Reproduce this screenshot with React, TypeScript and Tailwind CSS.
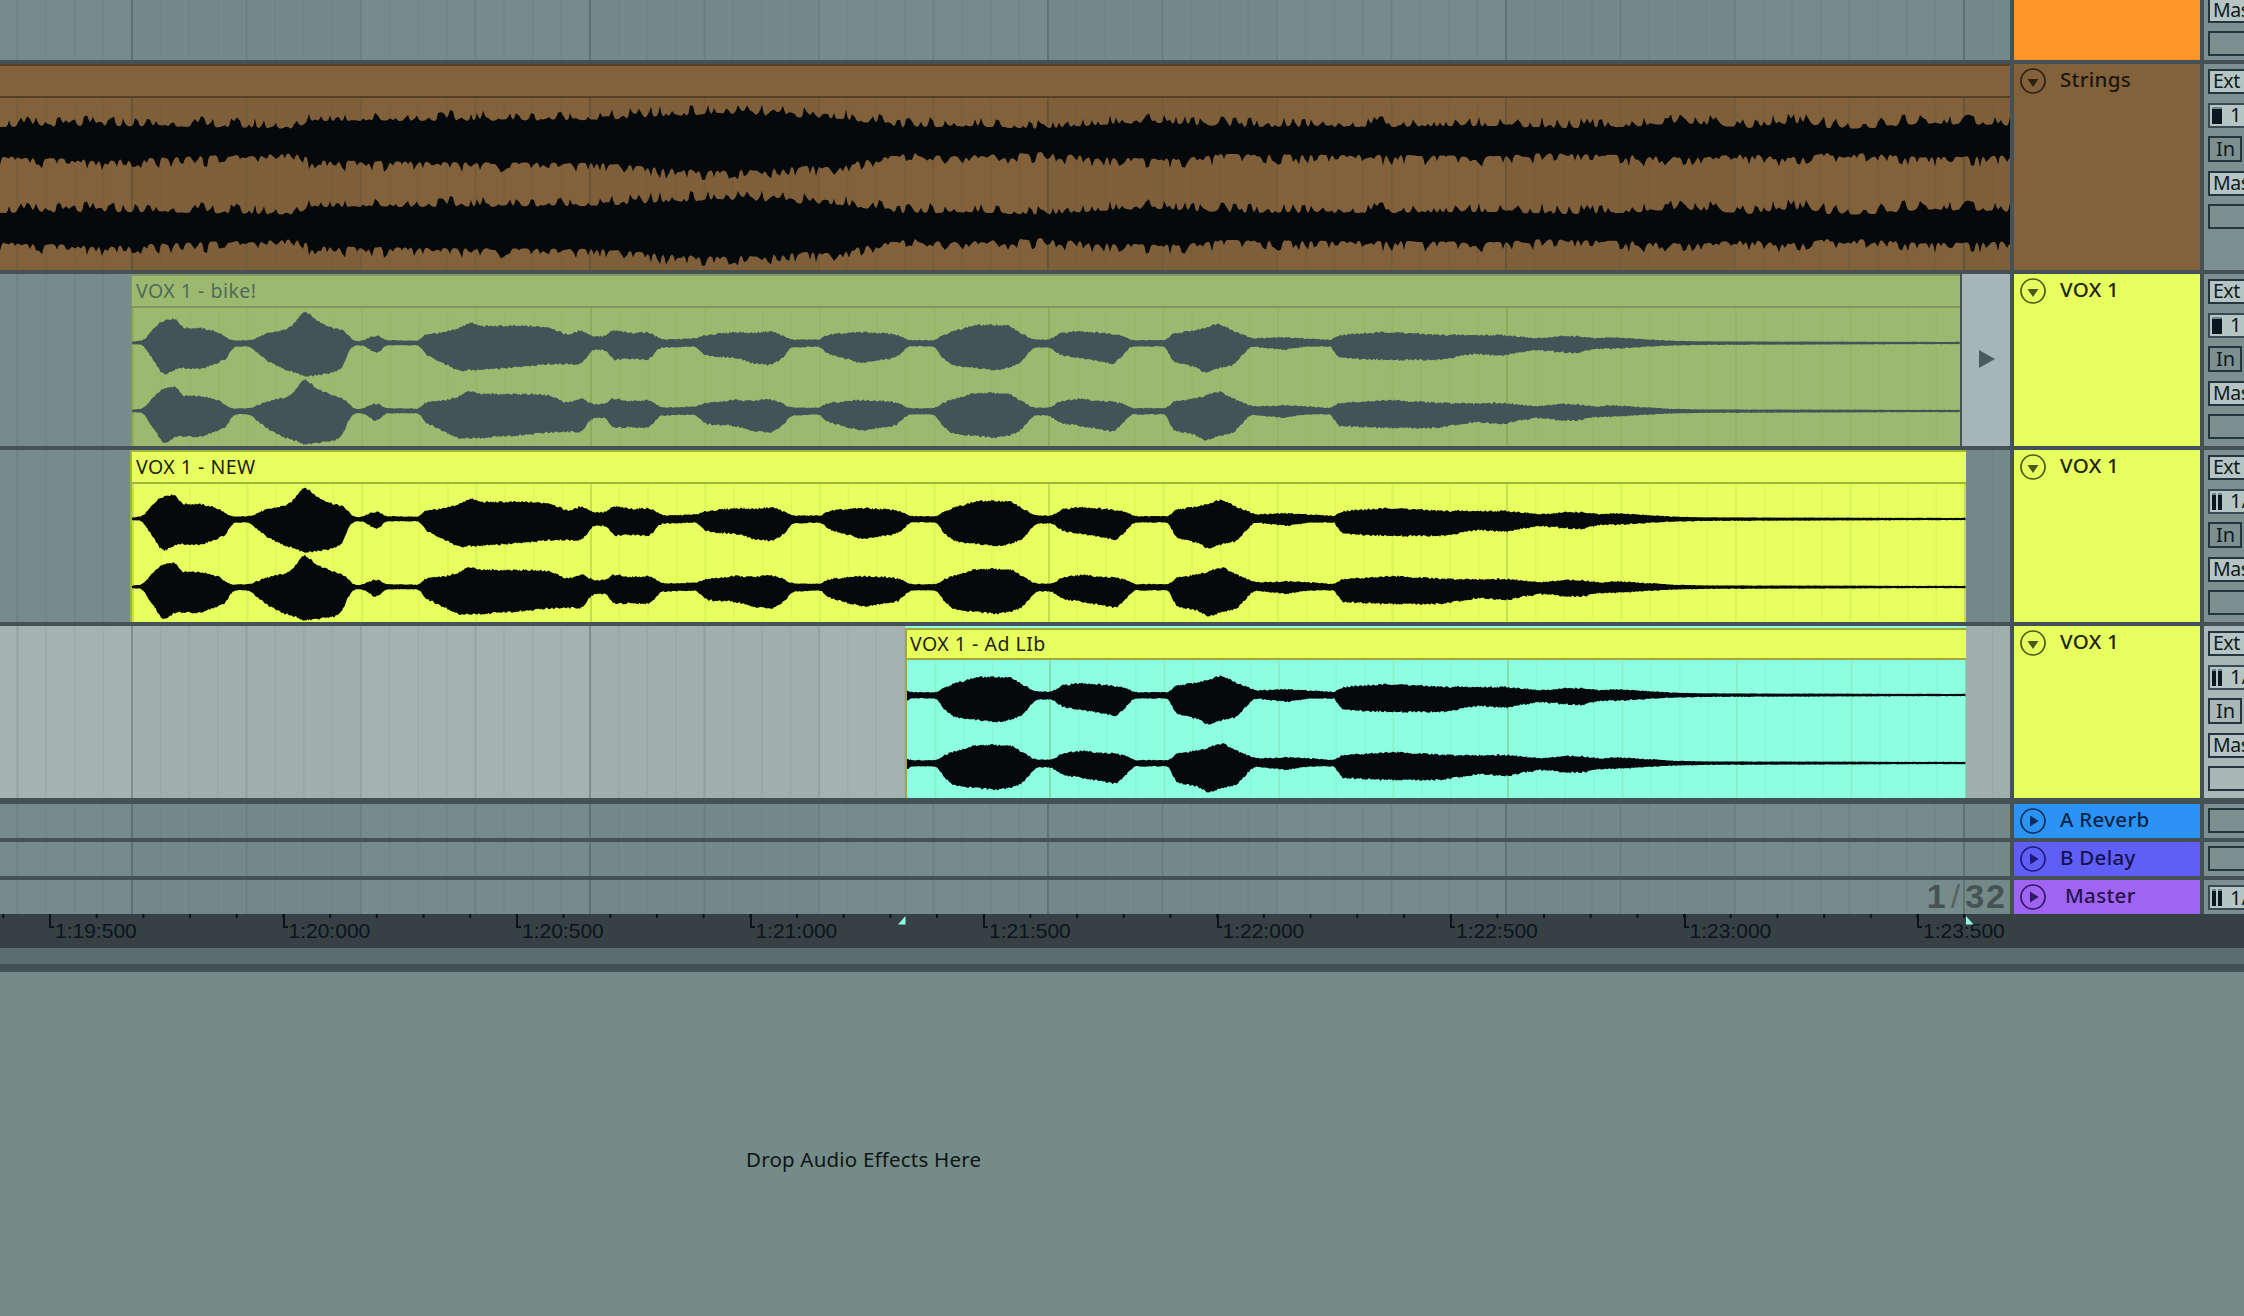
type Env = [number, number, number][];

// envelope of the vocal take: [x, up, down] in page pixels
const VOX_ENV: Env = [
  [131, 1, 1], [143, 2.5, 1.5], [147, 6, 9], [153, 14, 16], [157, 18, 24], [163, 22, 32], [177, 24, 24], [180, 14, 24], [200, 14, 25],
  [217, 10, 19], [227, 4, 14], [232, 2, 3], [250, 2.5, 3], [267, 8.5, 17], [283, 12, 25], [290, 14, 27], [298, 24, 30], [303, 32, 32],
  [308, 29, 32], [317, 21, 31], [333, 14, 29], [343, 12, 24], [347, 8, 10], [353, 2, 2], [362, 1.5, 2], [367, 4, 4], [377, 7, 10],
  [385, 2.5, 2], [420, 2, 2], [425, 8, 10], [443, 9, 19], [460, 14, 27], [470, 20, 26], [480, 16, 26], [523, 16, 23], [550, 15, 20],
  [563, 9, 20], [568, 7, 20], [583, 12, 20], [592, 6, 6], [607, 6, 6], [613, 12, 16], [630, 9, 15], [650, 10, 16], [660, 4, 4],
  [667, 3, 4], [697, 4, 3], [707, 7, 12], [737, 10, 14], [753, 9, 19], [773, 11, 21], [785, 6, 13], [792, 3, 4], [823, 3, 3],
  [827, 7, 9], [863, 10, 19], [897, 8, 14], [910, 2.5, 3], [938, 2.5, 3], [942, 6, 11], [953, 10, 21], [977, 17, 24], [1000, 17, 26],
  [1013, 16, 23], [1023, 9, 19], [1035, 3, 4], [1053, 3, 4], [1063, 9, 11], [1083, 11, 14], [1117, 8, 20], [1128, 6, 9], [1133, 2.5, 3],
  [1170, 2.5, 3], [1175, 8, 18], [1200, 12, 23], [1207, 14, 29], [1222, 19, 24], [1237, 11, 21], [1250, 6, 6], [1255, 4, 3], [1287, 5, 6],
  [1310, 4, 3], [1337, 2.5, 3], [1340, 7, 14], [1393, 10, 16], [1443, 7, 16], [1477, 7, 10], [1507, 7, 12], [1520, 6, 9], [1540, 4, 6],
  [1567, 6, 8], [1580, 6, 9], [1600, 4, 5], [1617, 5, 5], [1637, 4, 4], [1673, 2, 2.3], [1707, 1.4, 1.6], [1800, 1.2, 1.4], [1917, 1, 1], [1966, 1, 1],
];

const STRINGS_ENV: Env = [
  [0, 14, 15], [100, 15, 19], [200, 14, 15], [300, 12, 12], [312, 20, 19], [440, 20, 21], [610, 21, 22], [650, 24, 26], [700, 26, 29],
  [730, 27, 29], [790, 24, 26], [840, 22, 23], [915, 12, 11], [950, 15, 15], [1040, 12, 11], [1100, 16, 15], [1160, 18, 18], [1220, 14, 13],
  [1400, 14, 14], [1500, 15, 15], [1540, 13, 12], [1600, 13, 13], [1690, 17, 16], [1750, 13, 13], [1780, 17, 16], [1810, 17, 15], [1830, 12, 11],
  [1880, 13, 13], [1920, 17, 16], [1990, 16, 15], [2010, 15, 14],
];

function lookup(env: Env, x: number): [number, number] {
  for (let i = 1; i < env.length; i++) {
    if (x <= env[i][0]) {
      const [x0, u0, d0] = env[i - 1];
      const [x1, u1, d1] = env[i];
      const t = (x - x0) / (x1 - x0);
      return [u0 + (u1 - u0) * t, d0 + (d1 - d0) * t];
    }
  }
  const last = env[env.length - 1];
  return [last[1], last[2]];
}

function smooth(env: Env, x: number): [number, number] {
  let up = 0;
  let down = 0;
  for (let k = -2; k <= 2; k++) {
    const [u, d] = lookup(env, x + k * 1.6);
    up += u;
    down += d;
  }
  return [up / 5, down / 5];
}

function noise(i: number, seed: number) {
  const v = Math.sin(i * 12.9898 + seed * 78.233) * 43758.5453;
  return v - Math.floor(v);
}

function voxPath(from: number, to: number, origin: number, centre: number, seed: number) {
  const top: string[] = [];
  const bottom: string[] = [];
  const step = 1.2;
  let n = Math.round(from / step);
  for (let x = from; x <= to; x += step, n++) {
    const [up, down] = smooth(VOX_ENV, x);
    const a = noise(n, seed) * 2 * Math.min(1, up / 7);
    const b = noise(n + 500, seed) * 2 * Math.min(1, down / 7);
    top.push(`${(x - origin).toFixed(1)} ${(centre - up - a).toFixed(1)}`);
    bottom.push(`${(x - origin).toFixed(1)} ${(centre + down + b).toFixed(1)}`);
  }
  return `M${top.join('L')}L${bottom.reverse().join('L')}Z`;
}

// strings are dense: spiky peaks sitting on a fat body
function spikes(n: number, seed: number) {
  const k = Math.floor(n / 2);
  const t = (n % 2) / 2;
  const v = noise(k, seed) * (1 - t) + noise(k + 1, seed) * t;
  return Math.pow(v, 2.4) * 11;
}

function stringsPath(centre: number) {
  const top: string[] = [];
  const bottom: string[] = [];
  let n = 0;
  for (let x = 0; x <= 2010; x += 1.5, n++) {
    const [up, down] = lookup(STRINGS_ENV, x);
    top.push(`${x.toFixed(1)} ${(centre - up - spikes(n, 5)).toFixed(1)}`);
    bottom.push(`${x.toFixed(1)} ${(centre + down + spikes(n, 9)).toFixed(1)}`);
  }
  return `M${top.join('L')}L${bottom.reverse().join('L')}Z`;
}

function VoxWave({ from, color }: { from: number; color: string }) {
  const end = 1966;
  return (
    <svg className="block h-[138px] w-full" viewBox={`0 0 ${end - from} 138`} preserveAspectRatio="none">
      <path d={voxPath(from, end, from, 35, 1)} fill={color} />
      <path d={voxPath(from, end, from, 103, 2)} fill={color} />
    </svg>
  );
}

function StringsWave() {
  return (
    <svg className="block h-[172px] w-full" viewBox="0 0 2010 172" preserveAspectRatio="none">
      <path d={stringsPath(43)} fill="#05090c" />
      <path d={stringsPath(129)} fill="#05090c" />
    </svg>
  );
}

const gridLines =
  'bg-[linear-gradient(90deg,rgba(40,60,50,0.18)_2px,transparent_2px),linear-gradient(90deg,rgba(40,60,50,0.07)_2px,transparent_2px),linear-gradient(90deg,rgba(40,60,50,0.06)_2px,transparent_2px),linear-gradient(90deg,rgba(0,10,10,0.025)_50%,transparent_50%)] [background-size:458px_100%,114.5px_100%,28.625px_100%,458px_100%]';
const clipLines =
  'bg-[linear-gradient(90deg,rgba(90,130,30,0.16)_2px,transparent_2px),linear-gradient(90deg,rgba(90,130,30,0.05)_2px,transparent_2px),linear-gradient(90deg,rgba(90,130,30,0.06)_2px,transparent_2px)] [background-size:458px_100%,114.5px_100%,28.625px_100%]';
const gridFromPage = '[background-position:131px_0,16.5px_0,16.5px_0,131px_0]';
const gridFromClip = '[background-position:0_0,0_0,0_0]';
const gridFromAdLib = '[background-position:142px_0,27.5px_0,27.5px_0]';

const sans = "font-['Noto_Sans','Open_Sans',sans-serif]";

function TrackIcon({ open, color }: { open?: boolean; color: string }) {
  return (
    <svg width="26" height="26" viewBox="-13 -13 26 26" className="shrink-0">
      <circle r="12" fill="none" stroke={color} strokeWidth="1.7" />
      {open ? <path d="M-5.5 -2H5.5L0 6Z" fill={color} /> : <path d="M-3 -5.5V5.5L5.7 0Z" fill={color} />}
    </svg>
  );
}

function TrackTitle({
  name,
  bg,
  text,
  icon,
  open,
  nameOffset = 'ml-[14px]',
}: {
  name: string;
  bg: string;
  text: string;
  icon: string;
  open?: boolean;
  nameOffset?: string;
}) {
  return (
    <div className={`flex w-[186px] shrink-0 items-start pl-[6px] pt-[4px] ${bg}`}>
      <TrackIcon open={open} color={icon} />
      <span className={`${nameOffset} -mt-[2px] whitespace-pre text-[20.5px] font-medium leading-[26px] tracking-[0.3px] ${sans} ${text}`}>
        {name}
      </span>
    </div>
  );
}

function LightBox({ label }: { label: string }) {
  return (
    <div className={`h-[25px] w-[60px] shrink-0 overflow-hidden border-2 border-[#26343b] bg-[#b5c5c4] pl-[3px] text-[19.5px] leading-[20px] tracking-[-0.5px] text-[#0e1a20] ${sans}`}>
      {label}
    </div>
  );
}

function MonitorBox({ label, bars }: { label: string; bars: 1 | 2 }) {
  return (
    <div className={`flex h-[25px] w-[60px] shrink-0 items-center gap-[8px] overflow-hidden border-2 border-[#3a4a50] bg-[#b5c5c4] pl-[2px] text-[20px] leading-[20px] text-[#0e1a20] ${sans}`}>
      {bars === 1 ? (
        <span className="h-[17px] w-[10px] shrink-0 border-t-[2px] border-[#71858a] bg-[#0c1820]" />
      ) : (
        <span className="flex shrink-0 gap-[2px]">
          <span className="h-[17px] w-[4px] border-t-[2px] border-[#71858a] bg-[#0c1820]" />
          <span className="h-[17px] w-[4px] border-t-[2px] border-[#71858a] bg-[#0c1820]" />
        </span>
      )}
      <span>{label}</span>
    </div>
  );
}

function InBox() {
  return (
    <div className={`h-[26px] w-[34px] shrink-0 border-2 border-[#26343b] pl-[6px] text-[20px] leading-[21px] text-[#0e1a20] ${sans}`}>In</div>
  );
}

function EmptyBox() {
  return <div className="h-[25px] w-[60px] shrink-0 border-2 border-[#26343b]" />;
}

function RoutingPanel({ mono, light }: { mono: string; light?: boolean }) {
  return (
    <div className={`flex min-w-0 flex-1 flex-col gap-[8.5px] overflow-hidden pl-[4px] pt-[5px] ${light ? 'bg-[#a9b8b7]' : 'bg-[#7c918f]'}`}>
      <LightBox label="Ext" />
      <MonitorBox label={mono} bars={mono === '1' ? 1 : 2} />
      <InBox />
      <LightBox label="Mas" />
      <EmptyBox />
    </div>
  );
}

function ClipTitle({ label, bg, line, text }: { label: string; bg: string; line: string; text: string }) {
  return (
    <div className={`h-[34px] shrink-0 border-y-2 pl-[4px] text-[19.5px] leading-[30px] tracking-[0.5px] ${sans} ${bg} ${line} ${text}`}>{label}</div>
  );
}

const TICK_LABELS = ['1:19:500', '1:20:000', '1:20:500', '1:21:000', '1:21:500', '1:22:000', '1:22:500', '1:23:000', '1:23:500'];

function Ruler() {
  return (
    <div className="relative flex h-[34px] w-full shrink-0 bg-[#364143]">
      <div className="flex h-full w-[2010px] bg-[linear-gradient(90deg,#0c1418_2px,transparent_2px)] bg-repeat-x pl-[49px] [background-position:2.3px_0] [background-size:46.7px_4px]">
        {TICK_LABELS.map((t) => (
          <div key={t} className="relative w-[233.5px] shrink-0 pl-[6px] pt-[5px]">
            <span className="absolute left-0 top-0 h-[14px] w-[5px] border-b-2 border-l-2 border-[#0c1418]" />
            <span className="font-['Liberation_Sans',Arial,sans-serif] text-[21px] leading-[24px] text-[#0c1420]">{t}</span>
          </div>
        ))}
      </div>
      {/* loop brace markers */}
      <svg className="absolute left-[898px] top-[2px]" width="8" height="9" viewBox="0 0 8 9">
        <path d="M7.5 0V8.5H0Z" fill="#8fffe0" />
      </svg>
      <svg className="absolute left-[1966px] top-[2px]" width="8" height="9" viewBox="0 0 8 9">
        <path d="M0 0V8.5H7.5Z" fill="#8fffe0" />
      </svg>
    </div>
  );
}

export default function App() {
  return (
    <div className="flex h-[1316px] w-[2244px] flex-col overflow-hidden bg-[#748b87]">
      <div className="flex flex-col gap-[4px] bg-[#445256]">
        {/* group track */}
        <div className="flex h-[60px] gap-[4px]">
          <div className={`w-[2010px] shrink-0 bg-[#768c8b] ${gridLines} ${gridFromPage}`} />
          <div className="w-[186px] shrink-0 bg-[#ff9429]" />
          <div className="flex min-w-0 flex-1 flex-col justify-end gap-[8.5px] overflow-hidden bg-[#7c918f] pb-[4px] pl-[4px]">
            <LightBox label="Mas" />
            <EmptyBox />
          </div>
        </div>

        {/* Strings */}
        <div className="flex h-[206px] gap-[4px]">
          <div className="flex w-[2010px] shrink-0 flex-col overflow-hidden">
            <div className="h-[34px] shrink-0 border-y-2 border-[#574026] bg-[#82613b]" />
            <div className={`flex-1 bg-[#82613b] ${gridLines} ${gridFromPage}`}>
              <StringsWave />
            </div>
          </div>
          <TrackTitle name="Strings" bg="bg-[#82613b]" text="text-[#1a1610]" icon="#2b2216" open />
          <RoutingPanel mono="1" />
        </div>

        {/* VOX 1 - bike! */}
        <div className="flex h-[172px] gap-[4px]">
          <div className={`flex w-[2010px] shrink-0 bg-[#768c8b] ${gridLines} ${gridFromPage}`}>
            <div className="ml-[131px] flex w-[1829px] shrink-0 flex-col overflow-hidden border-l-[1px] border-[#7f9660] bg-[#9db96f]">
              <ClipTitle label="VOX 1 - bike!" bg="bg-[#9db96f]" line="border-[#7f9660]" text="text-[#4f6a5c]" />
              <div className={`h-[138px] shrink-0 ${clipLines} ${gridFromClip}`}>
                <VoxWave from={131} color="#445357" />
              </div>
            </div>
            <div className="flex flex-1 items-center justify-center border-l-2 border-[#445256] bg-[#a6b5b5]">
              <svg width="16" height="18" viewBox="0 0 16 18" className="ml-[1px] mt-[-2px]">
                <path d="M0 0L16 9L0 18Z" fill="#4a5b5e" />
              </svg>
            </div>
          </div>
          <TrackTitle name="VOX 1" bg="bg-[#e8ff60]" text="text-[#1c2608]" icon="#4a5a15" open />
          <RoutingPanel mono="1" />
        </div>

        {/* VOX 1 - NEW */}
        <div className="flex h-[172px] gap-[4px]">
          <div className={`flex w-[2010px] shrink-0 bg-[#768c8b] ${gridLines} ${gridFromPage}`}>
            <div className="ml-[130px] flex w-[1836px] shrink-0 flex-col overflow-hidden border-l-2 border-[#a0b53c] bg-[#e8ff60]">
              <ClipTitle label="VOX 1 - NEW" bg="bg-[#e8ff60]" line="border-[#a0b53c]" text="text-[#1a1f06]" />
              <div className={`h-[138px] shrink-0 ${clipLines} ${gridFromClip}`}>
                <VoxWave from={132} color="#05090c" />
              </div>
            </div>
          </div>
          <TrackTitle name="VOX 1" bg="bg-[#e8ff60]" text="text-[#1c2608]" icon="#4a5a15" open />
          <RoutingPanel mono="1/" />
        </div>

        {/* VOX 1 - Ad LIb */}
        <div className="flex h-[172px] gap-[4px]">
          <div className={`flex w-[2010px] shrink-0 bg-[#a4b3b1] ${gridLines} ${gridFromPage}`}>
            <div className="ml-[905px] flex w-[1061px] shrink-0 flex-col overflow-hidden">
              <div className="h-[2px] shrink-0 bg-[#8fffe0]" />
              <div className="flex flex-1 flex-col border-l-2 border-[#a0a83a] bg-[#8dffe0]">
                <div className={`h-[32px] shrink-0 border-y-2 border-[#a0a83a] bg-[#e8ff60] pl-[3px] text-[19.5px] leading-[28px] tracking-[0.5px] text-[#1f2410] ${sans}`}>
                  VOX 1 - Ad LIb
                </div>
                <div className={`h-[138px] shrink-0 ${clipLines} ${gridFromAdLib}`}>
                  <VoxWave from={907} color="#05090c" />
                </div>
              </div>
            </div>
          </div>
          <TrackTitle name="VOX 1" bg="bg-[#e8ff60]" text="text-[#1c2608]" icon="#4a5a15" open />
          <RoutingPanel mono="1/" light />
        </div>

        {/* returns and master */}
        <div className="mt-[2px] flex h-[34px] gap-[4px]">
          <div className={`w-[2010px] shrink-0 bg-[#768c8b] ${gridLines} ${gridFromPage}`} />
          <TrackTitle name="A Reverb" bg="bg-[#2a93f5]" text="text-[#0b2547]" icon="#0f2e55" />
          <div className="min-w-0 flex-1 overflow-hidden bg-[#7c918f] pl-[4px] pt-[4px]">
            <EmptyBox />
          </div>
        </div>
        <div className="flex h-[34px] gap-[4px]">
          <div className={`w-[2010px] shrink-0 bg-[#768c8b] ${gridLines} ${gridFromPage}`} />
          <TrackTitle name="B Delay" bg="bg-[#5f5ef7]" text="text-[#15134f]" icon="#1e1b78" />
          <div className="min-w-0 flex-1 overflow-hidden bg-[#7c918f] pl-[4px] pt-[4px]">
            <EmptyBox />
          </div>
        </div>
        <div className="flex h-[34px] gap-[4px]">
          <div className={`relative w-[2010px] shrink-0 bg-[#768c8b] ${gridLines} ${gridFromPage}`}>
            <span className="absolute right-[3px] top-[-3px] font-['Liberation_Sans',Arial,sans-serif] text-[34px] font-bold leading-[38px] tracking-[2px] text-[#465353]">
              1<span className="mx-[3px] font-normal text-[#566464]">/</span>32
            </span>
          </div>
          <TrackTitle name="Master" bg="bg-[#a064f5]" text="text-[#24124a]" icon="#2e1a60" nameOffset="ml-[19px]" />
          <div className="min-w-0 flex-1 overflow-hidden bg-[#7c918f] pl-[4px] pt-[5px]">
            <MonitorBox label="1/" bars={2} />
          </div>
        </div>
      </div>

      <Ruler />
      <div className="h-[16px] shrink-0 bg-[#5b6d71]" />
      <div className="h-[8px] shrink-0 bg-[#445154]" />

      {/* device chain drop area */}
      <div className={`flex-1 pl-[746px] pt-[173px] text-[20.5px] leading-[28px] tracking-[0.2px] text-[#101614] ${sans}`}>Drop Audio Effects Here</div>
    </div>
  );
}
